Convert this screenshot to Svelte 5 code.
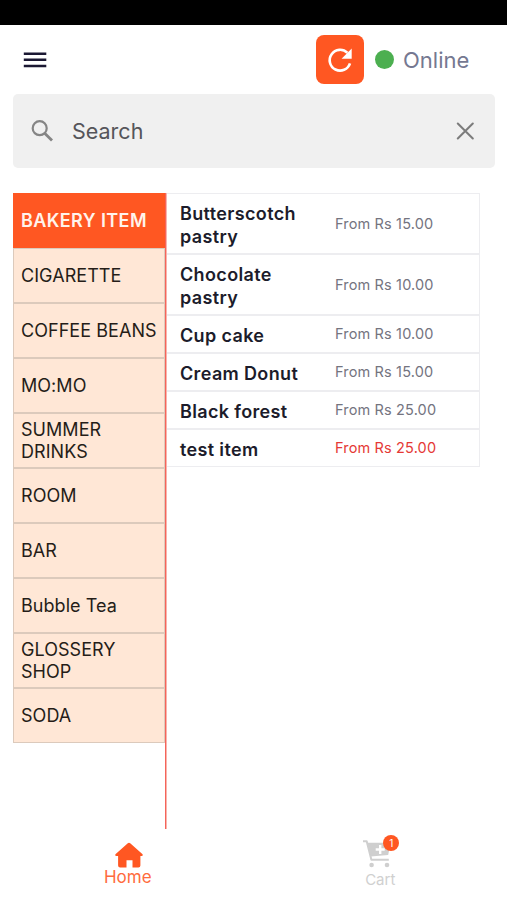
<script lang="ts">
	type Product = {
		name: string;
		price: string;
		alert?: boolean;
	};

	const categories = [
		"BAKERY ITEM",
		"CIGARETTE",
		"COFFEE BEANS",
		"MO:MO",
		"SUMMER DRINKS",
		"ROOM",
		"BAR",
		"Bubble Tea",
		"GLOSSERY SHOP",
		"SODA"
	];

	const products: Product[] = [
		{ name: "Butterscotch pastry", price: "15.00" },
		{ name: "Chocolate pastry", price: "10.00" },
		{ name: "Cup cake", price: "10.00" },
		{ name: "Cream Donut", price: "15.00" },
		{ name: "Black forest", price: "25.00" },
		{ name: "test item", price: "25.00", alert: true }
	];

	let selected = $state("BAKERY ITEM");
	let query = $state("");
	let cartCount = $state(1);
</script>

<div class="app">
	<div class="statusbar"></div>

	<header class="header">
		<button class="menu" aria-label="Menu">
			<svg width="24" height="16" viewBox="0 0 24 16">
				<path d="M.8 1.8h22.5M.8 7.8h22.5M.8 13.9h22.5" stroke="#1b1833" stroke-width="2.5" />
			</svg>
		</button>
		<div class="header__right">
			<button class="refresh" aria-label="Refresh">
				<svg width="28" height="28" viewBox="0 0 28 28">
					<path d="M21.4 6.8A10.4 10.4 0 1 0 24 17.4" fill="none" stroke="#fff" stroke-width="2.6" />
					<path d="M25.7 2.4v10.4H15.6z" fill="#fff" />
				</svg>
			</button>
			<span class="dot"></span>
			<span class="status">Online</span>
		</div>
	</header>

	<div class="search">
		<svg width="24" height="24" viewBox="0 0 24 24" fill="none" stroke="#858585">
			<circle cx="9.7" cy="9.2" r="7" stroke-width="2.2" />
			<path d="M14.7 14.2l7.3 7.3" stroke-width="2.8" />
		</svg>
		<input type="text" placeholder="Search" bind:value={query} />
		<button aria-label="Clear" onclick={() => (query = "")}>
			<svg width="18" height="18" viewBox="0 0 18 18">
				<path d="M1.8 1.5l15 15M16.8 1.5l-15 15" stroke="#7c7c7c" stroke-width="2" stroke-linecap="round" />
			</svg>
		</button>
	</div>

	<main class="content">
		<nav class="categories">
			{#each categories as category}
				<button class="category" class:active={category === selected} onclick={() => (selected = category)}>
					{category}
				</button>
			{/each}
		</nav>
		<div class="divider"></div>
		<section class="products">
			{#each products as product}
				<article class="product">
					<h3>{product.name}</h3>
					<p class:alert={product.alert}>From Rs {product.price}</p>
				</article>
			{/each}
		</section>
	</main>

	<footer class="tabs">
		<div class="tab tab--active">
			<svg width="30" height="26" viewBox="0 0 30 26">
				<path d="M13.8 1.3a1.8 1.8 0 0 1 2.4 0L28.3 12.1c1 .9.5 2-.6 2h-1.3v9.3a2 2 0 0 1-2 2h-5.9v-7.2h-6v7.2H6.1a2 2 0 0 1-2-2v-9.3H2.3c-1.1 0-1.6-1.1-.6-2z" fill="#ff5722" />
			</svg>
			<span>Home</span>
		</div>
		<div class="tab tab--cart">
			<div class="cart">
				<svg width="30" height="28" viewBox="0 0 30 28">
					<path d="M1 1.3h3.7l4.7 18.4h17.4" fill="none" stroke="#cfcfcf" stroke-width="2" stroke-linejoin="round" />
					<path d="M5.4 2.8h23.2l-2.4 12.1L8.6 16.5z" fill="#cfcfcf" />
					<path d="M18.2 5v9M13.7 9.5h9" stroke="#fff" stroke-width="2.4" />
					<circle cx="9.6" cy="25" r="2.3" fill="#cfcfcf" />
					<circle cx="25" cy="25" r="2.3" fill="#cfcfcf" />
				</svg>
				<span class="badge">{cartCount}</span>
			</div>
			<span>Cart</span>
		</div>
	</footer>
</div>

<style>
	:global(body) {
		margin: 0;
		background: #fff;
		font-family: Inter, "Liberation Sans", sans-serif;
	}

	button {
		border: none;
		padding: 0;
		background: none;
		font-family: inherit;
		cursor: pointer;
	}

	svg {
		display: block;
		flex: none;
	}

	.app {
		height: 900px;
		display: flex;
		flex-direction: column;
		overflow: hidden;
	}

	.statusbar {
		height: 25px;
		background: #000;
		flex: none;
	}

	.header {
		height: 69px;
		box-sizing: border-box;
		padding: 0 38px 0 23px;
		display: flex;
		align-items: center;
		justify-content: space-between;
	}

	.header__right {
		display: flex;
		align-items: center;
	}

	.refresh {
		width: 48px;
		height: 49px;
		border-radius: 8px;
		background: #ff5722;
		display: flex;
		align-items: center;
		justify-content: center;
	}

	.dot {
		width: 19px;
		height: 19px;
		margin: 0 9px 0 11px;
		border-radius: 50%;
		background: #4caf50;
	}

	.status {
		width: 66px;
		font-size: 22px;
		color: #757891;
	}

	.search {
		height: 74px;
		box-sizing: border-box;
		margin: 0 12px 25px 13px;
		padding: 0 21px 0 17px;
		border-radius: 5px;
		background: #f0f0f0;
		display: flex;
		align-items: center;
		flex: none;
	}

	.search input {
		flex: 1;
		min-width: 0;
		margin: 0 0 0 18px;
		padding: 0;
		border: none;
		outline: none;
		background: none;
		font-family: inherit;
		font-size: 21.5px;
		color: #55555a;
	}

	.search input::placeholder {
		color: #55555a;
		opacity: 1;
	}

	.content {
		height: 636px;
		flex: none;
		margin: 0 27px 0 13px;
		display: flex;
		align-items: stretch;
	}

	.categories {
		width: 152px;
		display: flex;
		flex-direction: column;
		flex: none;
	}

	.divider {
		width: 1px;
		flex: none;
		background: #f4645a;
		box-shadow: 1px 0 0 #f9b5ae;
		z-index: 1;
	}

	.category {
		height: 55px;
		box-sizing: border-box;
		padding: 0 4px 0 7px;
		border: 1px solid #dccabc;
		background: #ffe7d6;
		color: #251d18;
		font-size: 18px;
		line-height: 22px;
		letter-spacing: 0.05px;
		text-align: left;
	}

	.category.active {
		border-color: #ff5722;
		background: #ff5722;
		color: #fff3ec;
		font-weight: 600;
		letter-spacing: 0.4px;
	}

	.products {
		flex: 1;
	}

	.product {
		box-sizing: border-box;
		padding: 7px 0 6px 13px;
		border: 1px solid #ededf0;
		display: flex;
		align-items: center;
	}

	.product h3 {
		width: 130px;
		margin: 1px 25px -1px 0;
		font-size: 18px;
		font-weight: 600;
		line-height: 23px;
		letter-spacing: 0.35px;
		color: #1c1c2b;
	}

	.product p {
		margin: -2px 0 0;
		font-size: 14.5px;
		letter-spacing: 0.15px;
		color: #74747f;
	}

	.product p.alert {
		color: #e53935;
	}

	.tabs {
		flex: 1;
		display: grid;
		grid-template-columns: 1fr 1fr;
	}

	.tab {
		padding-top: 13px;
		display: flex;
		flex-direction: column;
		align-items: center;
		font-size: 16px;
	}

	.tab--active {
		padding-left: 2px;
		color: #ff6b3d;
		font-size: 17px;
		line-height: 19px;
	}

	.tab--active svg {
		margin-left: 2px;
	}

	.tab--cart {
		padding-top: 11px;
		color: #d0d0d0;
		font-size: 15px;
		line-height: 23px;
	}

	.cart {
		position: relative;
		margin-right: 6px;
	}

	.badge {
		position: absolute;
		top: -5px;
		left: 21px;
		width: 16px;
		height: 16px;
		border-radius: 50%;
		background: #ff5722;
		color: #fff;
		font-size: 10px;
		line-height: 16px;
		text-align: center;
	}
</style>
